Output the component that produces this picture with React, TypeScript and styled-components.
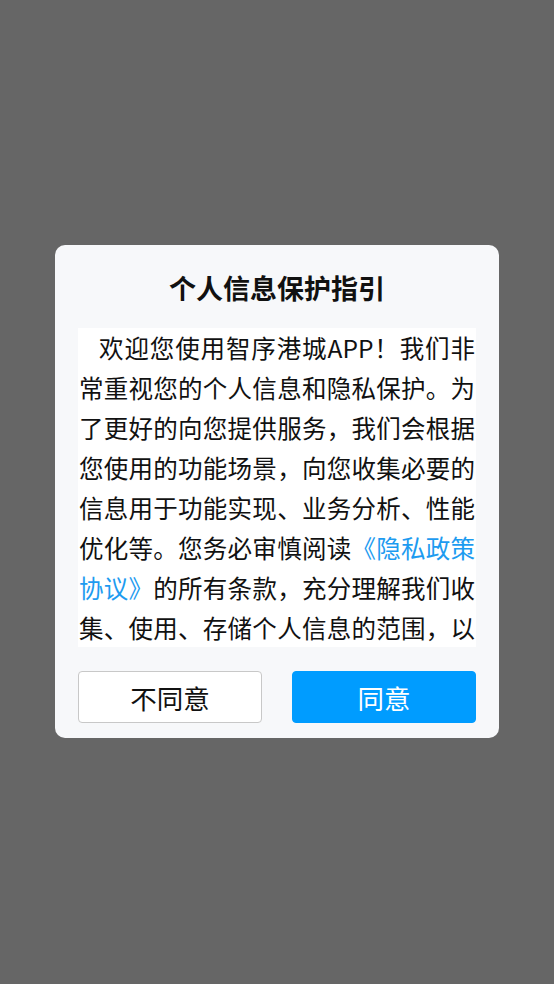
import styled, { createGlobalStyle } from "styled-components";

const GlobalStyle = createGlobalStyle`
  html, body {
    margin: 0;
    padding: 0;
    height: 100%;
  }
  body {
    font-family: "Noto Sans CJK SC", "Noto Sans", sans-serif;
    background: #666666;
  }
  #root {
    height: 100%;
  }
`;

const Overlay = styled.div`
  height: 100vh;
  display: flex;
  align-items: flex-start;
  justify-content: center;
  padding-top: 245px;
  box-sizing: border-box;
  background: #666666;
`;

const Dialog = styled.div`
  width: 444px;
  box-sizing: border-box;
  background: #f7f8fa;
  border-radius: 10px;
  padding: 26px 23px 15px;
  display: flex;
  flex-direction: column;
`;

const Title = styled.div`
  font-size: 27px;
  font-weight: bold;
  line-height: 34px;
  text-align: center;
  color: #111;
  margin-bottom: 23px;
`;

const Body = styled.div`
  height: 319px;
  overflow: hidden;
  background: #ffffff;
  font-size: 24.5px;
  line-height: 40px;
  color: #111;
  padding: 0 1px;
  text-align: justify;
  text-indent: 20px;
`;

const Link = styled.span`
  color: #1d9bf0;
`;

const Actions = styled.div`
  display: grid;
  grid-template-columns: 1fr 1fr;
  column-gap: 30px;
  margin-top: 24px;
`;

const Button = styled.button<{ $primary?: boolean }>`
  height: 52px;
  border-radius: 4px;
  font-family: inherit;
  font-size: 26.5px;
  padding: 0;
  cursor: pointer;
  border: 1px solid ${({ $primary }) => ($primary ? "#009cff" : "#c8c8c8")};
  background: ${({ $primary }) => ($primary ? "#009cff" : "#ffffff")};
  color: ${({ $primary }) => ($primary ? "#ffffff" : "#111")};
`;

export default function App() {
  return (
    <>
      <GlobalStyle />
      <Overlay>
        <Dialog>
          <Title>个人信息保护指引</Title>
          <Body>
            欢迎您使用智序港城APP！我们非常重视您的个人信息和隐私保护。为了更好的向您提供服务，我们会根据您使用的功能场景，向您收集必要的信息用于功能实现、业务分析、性能优化等。您务必审慎阅读
            <Link>《隐私政策协议》</Link>
            的所有条款，充分理解我们收集、使用、存储个人信息的范围，以及您享有的相关权利。如您同意，请点击“同意”开始接受我们的服务。
          </Body>
          <Actions>
            <Button>不同意</Button>
            <Button $primary>同意</Button>
          </Actions>
        </Dialog>
      </Overlay>
    </>
  );
}
